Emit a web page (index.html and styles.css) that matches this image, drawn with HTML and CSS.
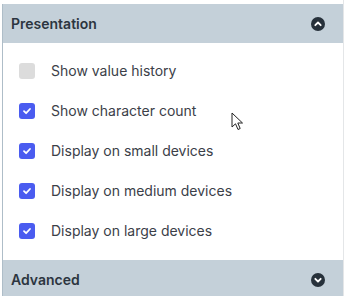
FILE: index.html
```html
<!DOCTYPE html>
<html lang="en">
<head>
  <meta charset="UTF-8">
  <title>Field settings</title>
  <link rel="stylesheet" href="styles.css">
</head>
<body>

<div class="sidebar">
  <div class="panel">
    <div class="section-header">
      <span>Presentation</span>
      <svg class="toggle" width="14" height="14" viewBox="0 0 14 14">
        <circle cx="7" cy="7" r="7" fill="#27313b"/>
        <path d="M4.3 8.2 L7 5.5 L9.7 8.2" fill="none" stroke="#fff" stroke-width="1.8" stroke-linecap="round" stroke-linejoin="round"/>
      </svg>
    </div>

    <div class="section-body">
      <label class="option">
        <span class="box"></span>
        Show value history
      </label>
      <label class="option">
        <span class="box checked">
          <svg width="10" height="10" viewBox="0 0 10 10"><path d="M2 5.2 L4.1 7.2 L8 3" fill="none" stroke="#fff" stroke-width="1.8" stroke-linecap="round" stroke-linejoin="round"/></svg>
        </span>
        Show character count
      </label>
      <label class="option">
        <span class="box checked">
          <svg width="10" height="10" viewBox="0 0 10 10"><path d="M2 5.2 L4.1 7.2 L8 3" fill="none" stroke="#fff" stroke-width="1.8" stroke-linecap="round" stroke-linejoin="round"/></svg>
        </span>
        Display on small devices
      </label>
      <label class="option">
        <span class="box checked">
          <svg width="10" height="10" viewBox="0 0 10 10"><path d="M2 5.2 L4.1 7.2 L8 3" fill="none" stroke="#fff" stroke-width="1.8" stroke-linecap="round" stroke-linejoin="round"/></svg>
        </span>
        Display on medium devices
      </label>
      <label class="option">
        <span class="box checked">
          <svg width="10" height="10" viewBox="0 0 10 10"><path d="M2 5.2 L4.1 7.2 L8 3" fill="none" stroke="#fff" stroke-width="1.8" stroke-linecap="round" stroke-linejoin="round"/></svg>
        </span>
        Display on large devices
      </label>
    </div>

    <div class="section-header">
      <span>Advanced</span>
      <svg class="toggle" width="14" height="14" viewBox="0 0 14 14">
        <circle cx="7" cy="7" r="7" fill="#27313b"/>
        <path d="M4.3 5.8 L7 8.5 L9.7 5.8" fill="none" stroke="#fff" stroke-width="1.8" stroke-linecap="round" stroke-linejoin="round"/>
      </svg>
    </div>
  </div>

  <svg class="cursor" width="14" height="20" viewBox="0 0 14 20">
    <path d="M1 1 L1 15 L4.5 11.8 L7 17.5 L9.2 16.5 L6.8 11 L11.5 11 Z" fill="#fff" stroke="#222" stroke-width="1" stroke-linejoin="round"/>
  </svg>
</div>

</body>
</html>
```

FILE: styles.css
```css
body {
  margin: 0;
  padding: 0;
  background-color: #fff;
  font-family: Inter, "Noto Sans", sans-serif;
  font-size: 14px;
  color: #3b4048;
}

.sidebar {
  position: relative;
  width: 343px;
  height: 296px;
  border-right: 1px solid #e4e6e8;
  overflow: hidden;
}

.panel {
  margin: 4px 0 0 2px;
  width: 340px;
  border-left: 1px solid #aebdc8;
}

.section-header {
  display: flex;
  align-items: center;
  justify-content: space-between;
  height: 39px;
  padding: 0 18px 0 8px;
  background-color: #c4d0d9;
  font-weight: 600;
  color: #2c3540;
}

.toggle {
  display: block;
}

.section-body {
  display: flex;
  flex-direction: column;
  gap: 24px;
  padding: 20px 16px 21px;
}

.option {
  display: flex;
  align-items: center;
  gap: 16px;
  height: 16px;
  line-height: 16px;
}

.box {
  display: flex;
  align-items: center;
  justify-content: center;
  width: 16px;
  height: 16px;
  border-radius: 3px;
  background-color: #dcdcdc;
}

.box.checked {
  background-color: #4a5cf0;
}

.cursor {
  position: absolute;
  left: 231px;
  top: 112px;
}
```
